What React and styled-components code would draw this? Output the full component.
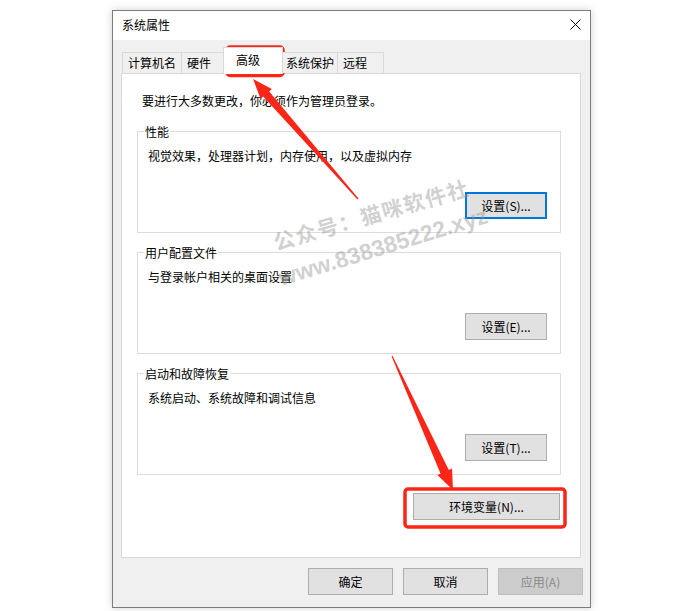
import React from "react";
import styled, { createGlobalStyle, css } from "styled-components";

const GlobalStyle = createGlobalStyle`
  html, body {
    margin: 0;
    padding: 0;
    background: #ffffff;
  }
  body {
    font-family: "Noto Sans CJK SC", "Liberation Sans", sans-serif;
    font-size: 12px;
    color: #000;
  }
`;

const Page = styled.div`
  position: relative;
  width: 689px;
  height: 611px;
  padding: 10px 0 0 112px;
  box-sizing: border-box;
  overflow: hidden;
`;

const Window = styled.div`
  width: 479px;
  height: 598px;
  box-sizing: border-box;
  border: 1px solid #7c7c7c;
  box-shadow: 0 0 8px rgba(0, 0, 0, 0.18);
  background: #f0f0f0;
  display: flex;
  flex-direction: column;
`;

const TitleBar = styled.div`
  flex: none;
  height: 29px;
  box-sizing: border-box;
  padding: 0 9px 2px 9px;
  background: #ffffff;
  display: flex;
  align-items: center;
  justify-content: space-between;
`;

const Title = styled.span`
  line-height: 17px;
`;

const Body = styled.div`
  flex: 1;
  display: flex;
  flex-direction: column;
  padding: 7px 9px 12px 8px;
`;

const TabRow = styled.div`
  position: relative;
  z-index: 1;
  flex: none;
  height: 26px;
  display: flex;
  align-items: flex-end;
  padding-left: 1px;
`;

const Tab = styled.div`
  box-sizing: border-box;
  width: ${(p) => p.$w}px;
  height: 21px;
  margin-right: -1px;
  padding-left: 5px;
  border: 1px solid #d9d9d9;
  border-bottom: none;
  background: #f0f0f0;
  line-height: 19px;
  white-space: nowrap;
  ${(p) =>
    p.$active &&
    css`
      position: relative;
      z-index: 2;
      width: ${p.$w + 4}px;
      height: 27px;
      margin: 0 -3px -1px -2px;
      padding-left: 12px;
      background: #ffffff;
      line-height: 24px;
    `}
`;

const Panel = styled.div`
  flex: 1;
  background: #ffffff;
  border: 1px solid #d9d9d9;
  padding: 18px 19px 0 15px;
  display: flex;
  flex-direction: column;
`;

const Intro = styled.div`
  line-height: 17px;
  padding-left: 5px;
  margin-bottom: 22px;
`;

const Groups = styled.div`
  display: flex;
  flex-direction: column;
  gap: 19px;
`;

const Group = styled.div`
  height: 102px;
  box-sizing: border-box;
  border: 1px solid #dcdcdc;
  display: flex;
  flex-direction: column;
`;

const GroupTitle = styled.div`
  align-self: flex-start;
  margin: -9px 0 0 6px;
  padding: 0 1px;
  background: #ffffff;
  line-height: 17px;
`;

const GroupText = styled.div`
  margin-top: 7px;
  padding-left: 10px;
  line-height: 17px;
`;

const Button = styled.button`
  box-sizing: border-box;
  width: ${(p) => p.$w}px;
  height: 27px;
  padding: 0;
  background: #e1e1e1;
  border: 1px solid #adadad;
  border-radius: 0;
  font-family: inherit;
  font-size: 12px;
  color: #000;
  ${(p) =>
    p.$focus &&
    css`
      border: 2px solid #0078d7;
    `}
  &:disabled {
    background: #cccccc;
    border-color: #bfbfbf;
    color: #8a8a8a;
  }
`;

const GroupButton = styled(Button)`
  margin: auto 13px 13px auto;
`;

const EnvButton = styled(Button)`
  align-self: flex-end;
  margin: 18px 1px 0 0;
`;

const Footer = styled.div`
  flex: none;
  display: flex;
  justify-content: flex-end;
  gap: 10px;
  margin: 10px -2px 0 0;
`;

const Overlay = styled.svg`
  position: absolute;
  left: 0;
  top: 0;
  pointer-events: none;
`;

const Mark = styled.div`
  position: absolute;
  left: ${(p) => p.$x}px;
  top: ${(p) => p.$y}px;
  transform: translate(-50%, -50%) rotate(-16deg);
  white-space: nowrap;
  font-weight: 700;
  color: rgba(150, 150, 150, 0.45);
  pointer-events: none;
`;

const MarkCn = styled(Mark)`
  font-family: "Noto Sans CJK SC", sans-serif;
  font-size: 21px;
  letter-spacing: 1.5px;
`;

const MarkUrl = styled(Mark)`
  font-family: "Liberation Sans", Arial, sans-serif;
  font-size: 23px;
  transform: translate(-50%, -50%) rotate(-17deg);
`;

const tabs = [
  { label: "计算机名", w: 60 },
  { label: "硬件", w: 45 },
  { label: "高级", w: 56, active: true },
  { label: "系统保护", w: 58 },
  { label: "远程", w: 47 },
];

const groups = [
  { title: "性能", text: "视觉效果，处理器计划，内存使用，以及虚拟内存", btn: "设置(S)...", focus: true },
  { title: "用户配置文件", text: "与登录帐户相关的桌面设置", btn: "设置(E)..." },
  { title: "启动和故障恢复", text: "系统启动、系统故障和调试信息", btn: "设置(T)..." },
];

const RED = "#fc2618";

export default function App() {
  return (
    <>
      <GlobalStyle />
      <Page>
        <Window>
          <TitleBar>
            <Title>系统属性</Title>
            <svg width="11" height="11" viewBox="0 0 11 11">
              <path d="M0.5 0.5 L10.5 10.5 M10.5 0.5 L0.5 10.5" stroke="#000" strokeWidth="1" />
            </svg>
          </TitleBar>
          <Body>
            <TabRow>
              {tabs.map((t) => (
                <Tab key={t.label} $w={t.w} $active={t.active}>
                  {t.label}
                </Tab>
              ))}
            </TabRow>
            <Panel>
              <Intro>要进行大多数更改，你必须作为管理员登录。</Intro>
              <Groups>
                {groups.map((g) => (
                  <Group key={g.title}>
                    <GroupTitle>{g.title}</GroupTitle>
                    <GroupText>{g.text}</GroupText>
                    <GroupButton $w={82} $focus={g.focus}>
                      {g.btn}
                    </GroupButton>
                  </Group>
                ))}
              </Groups>
              <EnvButton $w={147}>环境变量(N)...</EnvButton>
            </Panel>
            <Footer>
              <Button $w={85}>确定</Button>
              <Button $w={85}>取消</Button>
              <Button $w={85} disabled>
                应用(A)
              </Button>
            </Footer>
          </Body>
        </Window>

        <MarkCn $x={371} $y={214}>公众号：猫咪软件社</MarkCn>
        <MarkUrl $x={383} $y={247}>www.838385222.xyz</MarkUrl>

        <Overlay width="689" height="611" viewBox="0 0 689 611">
          <rect x="227" y="47" width="56" height="28.5" rx="3" fill="none" stroke={RED} strokeWidth="3.5" />
          <rect x="405" y="489" width="160" height="38" rx="3" fill="none" stroke={RED} strokeWidth="3.5" />
          <polygon
            fill={RED}
            points="358.5,198.6 269.2,91.4 271.8,89.1 253,79 260.6,98.9 263.2,96.6 357.5,199.4"
          />
          <polygon
            fill={RED}
            points="391.5,356.2 440.6,473.7 437.4,475.1 453,490 452.0,468.5 448.8,469.9 392.5,355.8"
          />
        </Overlay>
      </Page>
    </>
  );
}
